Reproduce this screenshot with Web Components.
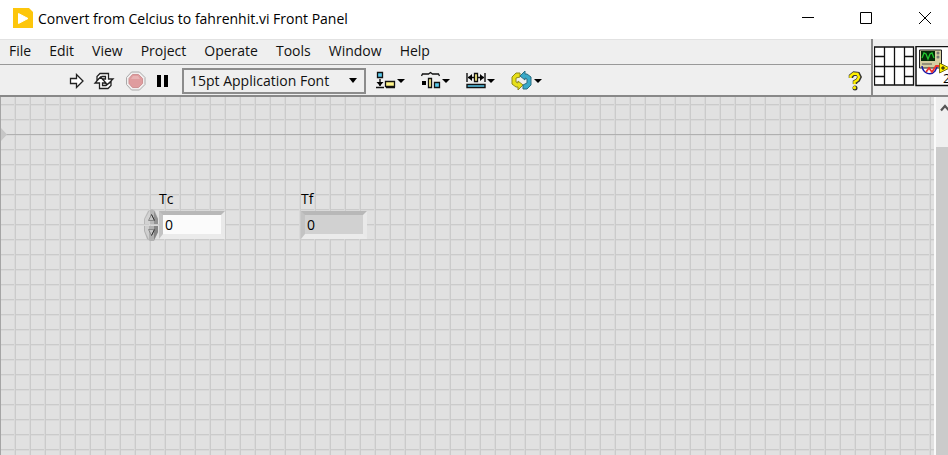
<!DOCTYPE html>
<html lang="en">
<head>
<meta charset="utf-8">
<title>Convert from Celcius to fahrenhit.vi Front Panel</title>
<style>
html, body { margin: 0; height: 100%; overflow: hidden; }
body { font-family: "Open Sans", "Noto Sans", sans-serif; font-size: 14px; color: #111; background: #fff; }
</style>
</head>
<body>
<vi-window></vi-window>
<script>
const define = (name, html, setup) => customElements.define(name, class extends HTMLElement {
  connectedCallback() {
    if (this.shadowRoot) return;
    const t = document.createElement('template');
    t.innerHTML = html;
    this.attachShadow({ mode: 'open' }).append(t.content.cloneNode(true));
    if (setup) setup(this, this.shadowRoot);
  }
});
const reset = 'button{font:inherit;color:inherit;background:none;border:0;padding:0;margin:0;display:flex;align-items:center;justify-content:center}svg{display:block}';

define('title-bar', `<style>${reset}
:host{display:flex;align-items:center;height:39px;background:#fff;color:#000;padding-left:13px}
h1{flex:1;font:inherit;margin:0 0 0 5px;line-height:20px;white-space:nowrap;padding-bottom:2px}
.logo{margin-bottom:3px}
button{width:58px;height:36px;margin-bottom:3px}
button:last-child{box-sizing:border-box;width:53px;padding-left:6px}
</style>
<svg class="logo" width="20" height="20"><path d="M0 0h16l4 4v16H0z" fill="#fdc60b"/><path d="M5.5 5.500l9.500 5-9.500 5z" fill="#fff" stroke="#fff" stroke-linejoin="round"/></svg>
<h1><slot></slot></h1>
<button aria-label="Minimize"><svg width="12" height="12" shape-rendering="crispEdges"><path d="M0 5h12v1H0z"/></svg></button>
<button aria-label="Maximize"><svg width="12" height="12" fill="none" stroke="#000"><path d="M.5.5h11v11H.5z"/></svg></button>
<button aria-label="Close"><svg width="12" height="12" fill="none" stroke="#000"><path d="M0 0l12 12M12 0L0 12"/></svg></button>`);

define('menu-bar', `<style>${reset}
:host{display:flex;gap:18px;height:25px;padding:0 0 3px 9px;box-sizing:border-box;border-top:1px solid #e2e2e2;background:#efefef}
button{line-height:20px}
</style>`, (el, root) => {
  for (const name of ['File','Edit','View','Project','Operate','Tools','Window','Help']) {
    const b = document.createElement('button');
    b.textContent = name;
    root.append(b);
  }
});

define('tool-button', `<style>${reset}:host{display:block}button{height:24px}</style><button><slot></slot></button>`,
  (el, root) => root.querySelector('button').setAttribute('aria-label', el.getAttribute('label')));

const caret = '<path d="M21 8h8l-4 4z"/>';
define('tool-bar', `<style>${reset}
:host{display:flex;align-items:center;height:31px;box-sizing:border-box;border-top:1px solid #999;background:#efefef;padding:2px 9px 0 69px}
.run{display:flex;gap:9px}
.font{position:relative;margin:0 10px 0 11px}
select{appearance:none;display:block;font:inherit;color:inherit;width:184px;height:26px;border:2px solid #8c8c8c;border-radius:0;background:#efefef;padding:0 0 2px 6px}
.font svg{position:absolute;right:9px;top:10px;pointer-events:none}
.layout{display:flex;gap:16px}
.help{margin-left:auto}
</style>
<div class="run">
<tool-button label="Run"><svg width="15" height="16"><path d="M1.500 5.500h6v-4L14 8l-6.500 6.500v-4h-6z" fill="#fff" stroke="#222" stroke-width="1.300"/></svg></tool-button>
<tool-button label="Run Continuously"><svg width="23" height="18" fill="#fff" stroke="#222" stroke-width="1.300"><path d="M4 8V4.500L7 1.500h8.500V7H20l-6 6-5-6h3.500V4.500H9L7.500 6z"/><path d="M18 10v3.500l-3 3H6.500V11H2l5.500-6 5.500 6H9.500v2.500H13l2-1.500z"/></svg></tool-button>
<tool-button label="Abort Execution"><svg width="21" height="20"><path d="M6.500 1h8L20 6.500v7L14.500 19h-8L1.500 13.500v-7z" fill="#f1eeee" stroke="#aaa"/><path d="M7.500 3.500h6l4 4v5l-4 4h-6l-3.500-4v-5z" fill="#df9c9e" stroke="#cf9294"/><path d="M6 8l2-3h5l2 3z" fill="#e7b2b3"/></svg></tool-button>
<tool-button label="Pause"><svg width="16" height="14"><path d="M2 1h4v12H2zM9 1h4v12H9z"/></svg></tool-button>
</div>
<div class="font"><select aria-label="Text settings"><option>15pt Application Font</option></select><svg width="8" height="5"><path d="M0 0h8L4 5z"/></svg></div>
<div class="layout">
<tool-button label="Align Objects"><svg width="29" height="20"><path d="M1.500 1.500h5v5h-5z" fill="#58c9ed" stroke="#111" stroke-width="1.300"/><path d="M4 8v7M0 16.500h8M10 16.500h9" fill="none" stroke="#111" stroke-width="1.400"/><path d="M.5 11h7L4 15z"/><path d="M9.500 10.500h9v5h-9z" fill="#fff58b" stroke="#111" stroke-width="1.300"/>${caret}</svg></tool-button>
<tool-button label="Distribute Objects"><svg width="29" height="20"><path d="M.5 5l1-2h6l2-1.500L11.500 3h6l1 2" fill="none" stroke="#111" stroke-width="1.300"/><path d="M1 10h4v4H1z"/><path d="M7.500 7.500h3v9h-3z" fill="#fff58b" stroke="#111" stroke-width="1.300"/><path d="M13.500 11.500h5v5h-5z" fill="#58c9ed" stroke="#111" stroke-width="1.300"/>${caret}</svg></tool-button>
<tool-button label="Resize Objects"><svg width="29" height="20"><path d="M1 2v9M19 2v9M2 6.500h6M12 6.500h6" fill="none" stroke="#111" stroke-width="1.400"/><path d="M2 6.500L6 3v7zM18 6.500L14 3v7z"/><path d="M8.500 2.500h3v8h-3z" fill="#fff58b" stroke="#111" stroke-width="1.300"/><path d="M1 13.500h18v3H1z" fill="#58c9ed" stroke="#111" stroke-width="1.400"/>${caret}</svg></tool-button>
<tool-button label="Reorder"><svg width="31" height="20"><path d="M9 2H5L1 6v7l4 3h2v3l5-5-5-4v2l-2-1V7l4-1z" fill="#e7df19" stroke="#8d881c"/><path d="M12 18h4l4-4V6l-4-3h-2V0L9 5l5 4V7l2 1v4l-4 2z" fill="#3aaac9" stroke="#2b6d80"/><path d="M23 8h8l-4 4z"/></svg></tool-button>
</div>
<tool-button class="help" label="Context Help"><svg width="14" height="20"><path d="M3 7V5l3-2.500 4 .5 1.500 3L10 9l-3 2v2" fill="none" stroke="#333" stroke-width="4.500"/><circle cx="7" cy="17" r="2.500" fill="#333"/><path d="M2.500 7V5L5.500 2.500l4 .5 1.500 3-1.500 3-3 2v2.300" fill="none" stroke="#ffef00" stroke-width="2.500"/><circle cx="6.500" cy="16.700" r="1.600" fill="#ffef00"/></svg></tool-button>`);

define('connector-pane', `<style>
:host{display:block;width:77px;box-sizing:border-box;border-left:2px solid #8a8a8a;background:#efefef;overflow:hidden}
svg{display:block;margin:7px 0 0 1px}text{font:13px "Open Sans",sans-serif}
</style>
<svg width="75" height="42" role="img" aria-label="Connector pane and VI icon">
<path d="M.5 1h39v38H.5zM10.500 1v38M20.500 1v38M30.500 1v38M.5 20.500h39M.5 10.500h10M.5 30.500h10M30.500 10.500h9M30.500 30.500h9" fill="#fff" stroke="#111" stroke-width="1.300"/>
<path d="M42 .5h34v39H42z" fill="#fff" stroke="#111" stroke-width="1.500"/>
<path d="M45.500 4h22v18h-22z" fill="#d5cfa2" stroke="#222"/><path d="M47 5h14v10H47z" fill="#052b09"/>
<path d="M48 12l2-5 2 1 2 5 2-5 2-1 2 5" fill="none" stroke="#21c72f" stroke-width="1.300"/>
<circle cx="64" cy="7" r="1.500" fill="#777"/><circle cx="64" cy="11" r="1.500" fill="#777"/><path d="M48 18h10" stroke="#555"/>
<path d="M48 20c1 8 9 10 13 5l2-4" fill="none" stroke="#171aad" stroke-width="1.500"/>
<path d="M52 26l3-4 3 4 4-6h4" fill="none" stroke="#f0332b" stroke-width="1.800"/>
<path d="M65.500 17l10 5-10 5z" fill="#fff000" stroke="#777214"/><path d="M67 22h4M69 20v4" stroke="#111"/>
<text x="69" y="37">2</text></svg>`);

define('numeric-field', `<style>${reset}
:host{display:grid;grid-template-columns:15px auto;align-items:center;color:#000}
label{grid-column:2;line-height:20px}
.spin{display:flex;flex-direction:column}
input{box-sizing:border-box;width:66px;height:28px;font:inherit;color:inherit;line-height:18px;border:solid;border-width:4px 4px 5px 4px;border-color:#b8b8b8 #e9e9e9 #ebebeb #c3c3c3;border-radius:0;background:#fbfbfb;padding:0 0 0 2px;margin:0}
:host([readonly]) input{background:#d1d1d1}
:host([readonly]) .spin{visibility:hidden}
</style>
<label for="v"></label>
<div class="spin">
<button aria-label="Increment"><svg width="15" height="16"><path d="M0 15V10l4-8 4-2 3 2 3 8v5z" fill="#b9b9b9"/><path d="M1 15v-5L6 1v14z" fill="#d2d2d2"/><path d="M10 15V2l4 8v5z" fill="#929292"/><path d="M4.500 11.500l3-6 3 6z" fill="#c5c5c5" stroke="#888"/><path d="M7.500 5.500l3 6" stroke="#333"/></svg></button>
<button aria-label="Decrement"><svg width="15" height="16"><path d="M0 1v5l3 8 3 2h4l4-9V1z" fill="#b1b1b1"/><path d="M1 1v5l4 9V1z" fill="#cfcfcf"/><path d="M10 1v14l4-8V1z" fill="#858585"/><path d="M4.500 4.500h6l-3 6z" fill="#c5c5c5" stroke="#888"/><path d="M10.500 4.500l-3 6" stroke="#333"/></svg></button>
</div>
<input id="v">`, (el, root) => {
  const input = root.querySelector('input');
  root.querySelector('label').textContent = el.getAttribute('label');
  input.value = el.getAttribute('value');
  input.readOnly = el.hasAttribute('readonly');
});

define('panel-grid', `<style>
:host{display:block;position:relative;flex:1;overflow:hidden;border-left:1px solid #a5a5a5;
background:
linear-gradient(#b0b0b0,#b0b0b0) 0 37px/100% 1px no-repeat,
repeating-linear-gradient(90deg,transparent 0 13px,#d9d9d9 13px 14px,#cbcbcb 14px 15px),
repeating-linear-gradient(transparent 0 7px,#cbcbcb 7px 8px,#d9d9d9 8px 9px,transparent 9px 15px),
#e1e1e1}
.origin{position:absolute;left:0;top:31px}
::slotted(.tc){position:absolute;left:143px;top:92px}
::slotted(.tf){position:absolute;left:285px;top:92px}
</style><svg class="origin" width="7" height="13"><path d="M0 0l6 6.500L0 13z" fill="#c6c6c6"/></svg><slot></slot>`);

define('scroll-bar', `<style>${reset}
:host{display:flex;flex-direction:column;width:14px;box-sizing:border-box;border-left:2px solid #fafafa;background:#efefef;overflow:hidden}
button{height:50px;align-items:flex-start;justify-content:flex-start;padding:6px 0 0 4px}
.thumb{flex:1;background:#cbcbcb}
</style><button aria-label="Scroll up"><svg width="10" height="10"><path d="M1 7.500l4-4.500 4 4.500" fill="none" stroke="#555" stroke-width="2.200"/></svg></button><div class="thumb"></div>`);

define('vi-window', `<style>
:host{display:flex;flex-direction:column;height:100vh}
header{display:flex;border-bottom:2px solid #888}
.bars{flex:1;min-width:0}
main{display:flex;flex:1;min-height:0}
</style>
<title-bar>Convert from Celcius to fahrenhit.vi Front Panel</title-bar>
<header><div class="bars"><menu-bar></menu-bar><tool-bar></tool-bar></div><connector-pane></connector-pane></header>
<main><panel-grid>
<numeric-field class="tc" label="Tc" value="0"></numeric-field>
<numeric-field class="tf" label="Tf" value="0" readonly></numeric-field>
</panel-grid><scroll-bar></scroll-bar></main>`);
</script>
</body>
</html>
